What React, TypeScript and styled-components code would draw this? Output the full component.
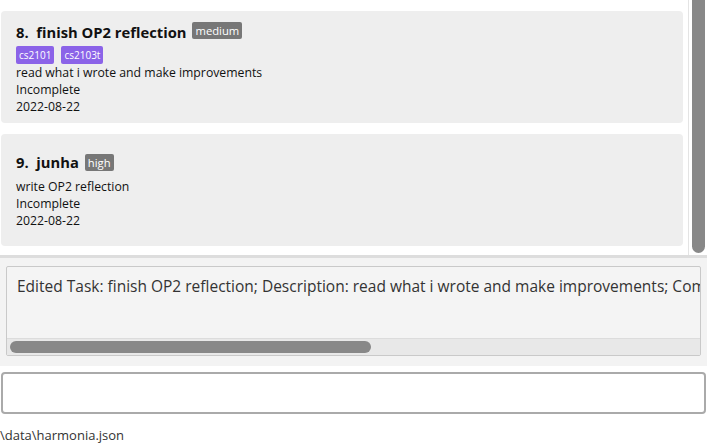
import React from "react";
import styled, { createGlobalStyle } from "styled-components";

const Global = createGlobalStyle`
  html, body { margin: 0; padding: 0; background: #ffffff; }
  body { font-family: "Open Sans", "Noto Sans", sans-serif; width: 707px; height: 446px; overflow: hidden; }
`;

const Page = styled.div`
  display: flex;
  flex-direction: column;
  width: 707px;
  height: 446px;
`;

const ListPanel = styled.div`
  display: flex;
  height: 255px;
  background: #ffffff;
  border-bottom: 3px solid #dddddd;
`;

const Cards = styled.div`
  flex: 1;
  display: flex;
  flex-direction: column;
  justify-content: flex-end;
  gap: 11px;
  padding: 0 5px 9px 1px;
  overflow: hidden;
`;

const Card = styled.div`
  flex: 0 0 112px;
  display: flex;
  flex-direction: column;
  justify-content: center;
  padding: 0 15px;
  background: #eeeeee;
  border-radius: 4px;
  color: #111;
`;

const TitleRow = styled.div<{ $shift: number }>`
  display: flex;
  align-items: center;
  gap: 6px;
  height: 27px;
  margin-top: ${(p) => -p.$shift}px;
  margin-bottom: ${(p) => p.$shift}px;
`;

const Title = styled.span`
  font-size: 14.75px;
  font-weight: 700;
  line-height: 27px;
  white-space: pre;
`;

const Priority = styled.span<{ $raise: number }>`
  background: #777777;
  color: #ffffff;
  font-size: 11.25px;
  line-height: 17px;
  padding: 0 3px;
  border-radius: 2px;
  margin-bottom: ${(p) => p.$raise}px;
`;

const Tags = styled.div`
  display: flex;
  gap: 7px;
  height: 18px;
`;

const Tag = styled.span`
  background: #8b63e8;
  color: #ffffff;
  font-size: 10px;
  line-height: 18px;
  padding: 0 3px;
  border-radius: 2px;
`;

const Line = styled.div`
  font-size: 12.25px;
  line-height: 17px;
`;

const Track = styled.div`
  width: 18px;
  border-left: 1px solid #e4e4e4;
  display: flex;
  justify-content: center;
`;

const Thumb = styled.div`
  width: 13px;
  height: 253px;
  background: #888888;
  border-radius: 0 0 7px 7px;
`;

const ResultPanel = styled.div`
  background: #f3f3f3;
  padding: 8px 6px 10px 6px;
`;

const ResultBox = styled.div`
  height: 88px;
  border: 1px solid #c9c9c9;
  border-radius: 2px;
  background: #f4f4f4;
  display: flex;
  flex-direction: column;
  overflow: hidden;
`;

const ResultText = styled.div`
  flex: 1;
  padding: 8px 10px;
  font-size: 15.5px;
  color: #333;
  white-space: nowrap;
  overflow: hidden;
`;

const HScroll = styled.div`
  height: 16px;
  background: #e8e8e8;
  border-top: 1px solid #dcdcdc;
  display: flex;
  align-items: center;
  padding-left: 3px;
`;

const HThumb = styled.div`
  width: 361px;
  height: 12px;
  background: #888888;
  border-radius: 6px;
`;

const CommandArea = styled.div`
  padding: 6px 1px 5px 1px;
  background: #ffffff;
`;

const CommandBox = styled.div`
  height: 38px;
  border: 2px solid #aaaaaa;
  border-radius: 4px;
  background: #ffffff;
`;

const Status = styled.div`
  font-size: 13px;
  color: #333;
  padding: 7px 0 0 0;
  line-height: 18px;
`;

type Task = { n: number; title: string; priority: string; raise: number; shift: number; tags: string[]; desc: string; status: string; date: string };

const tasks: Task[] = [
  { n: 8, title: "finish OP2 reflection", priority: "medium", raise: 4, shift: 0, tags: ["cs2101", "cs2103t"], desc: "read what i wrote and make improvements", status: "Incomplete", date: "2022-08-22" },
  { n: 9, title: "junha", priority: "high", raise: 0, shift: 2, tags: [], desc: "write OP2 reflection", status: "Incomplete", date: "2022-08-22" },
];

export default function App() {
  return (
    <Page>
      <Global />
      <ListPanel>
        <Cards>
          <Card />
          {tasks.map((t) => (
            <Card key={t.n}>
              <TitleRow $shift={t.shift}>
                <Title>{`${t.n}.  ${t.title}`}</Title>
                <Priority $raise={t.raise}>{t.priority}</Priority>
              </TitleRow>
              {t.tags.length > 0 && (
                <Tags>
                  {t.tags.map((g) => (
                    <Tag key={g}>{g}</Tag>
                  ))}
                </Tags>
              )}
              <Line>{t.desc}</Line>
              <Line>{t.status}</Line>
              <Line>{t.date}</Line>
            </Card>
          ))}
        </Cards>
        <Track>
          <Thumb />
        </Track>
      </ListPanel>
      <ResultPanel>
        <ResultBox>
          <ResultText>
            Edited Task: finish OP2 reflection; Description: read what i wrote and make improvements; Completion Status: Incomplete
          </ResultText>
          <HScroll>
            <HThumb />
          </HScroll>
        </ResultBox>
      </ResultPanel>
      <CommandArea>
        <CommandBox />
      </CommandArea>
      <Status>\data\harmonia.json</Status>
    </Page>
  );
}
